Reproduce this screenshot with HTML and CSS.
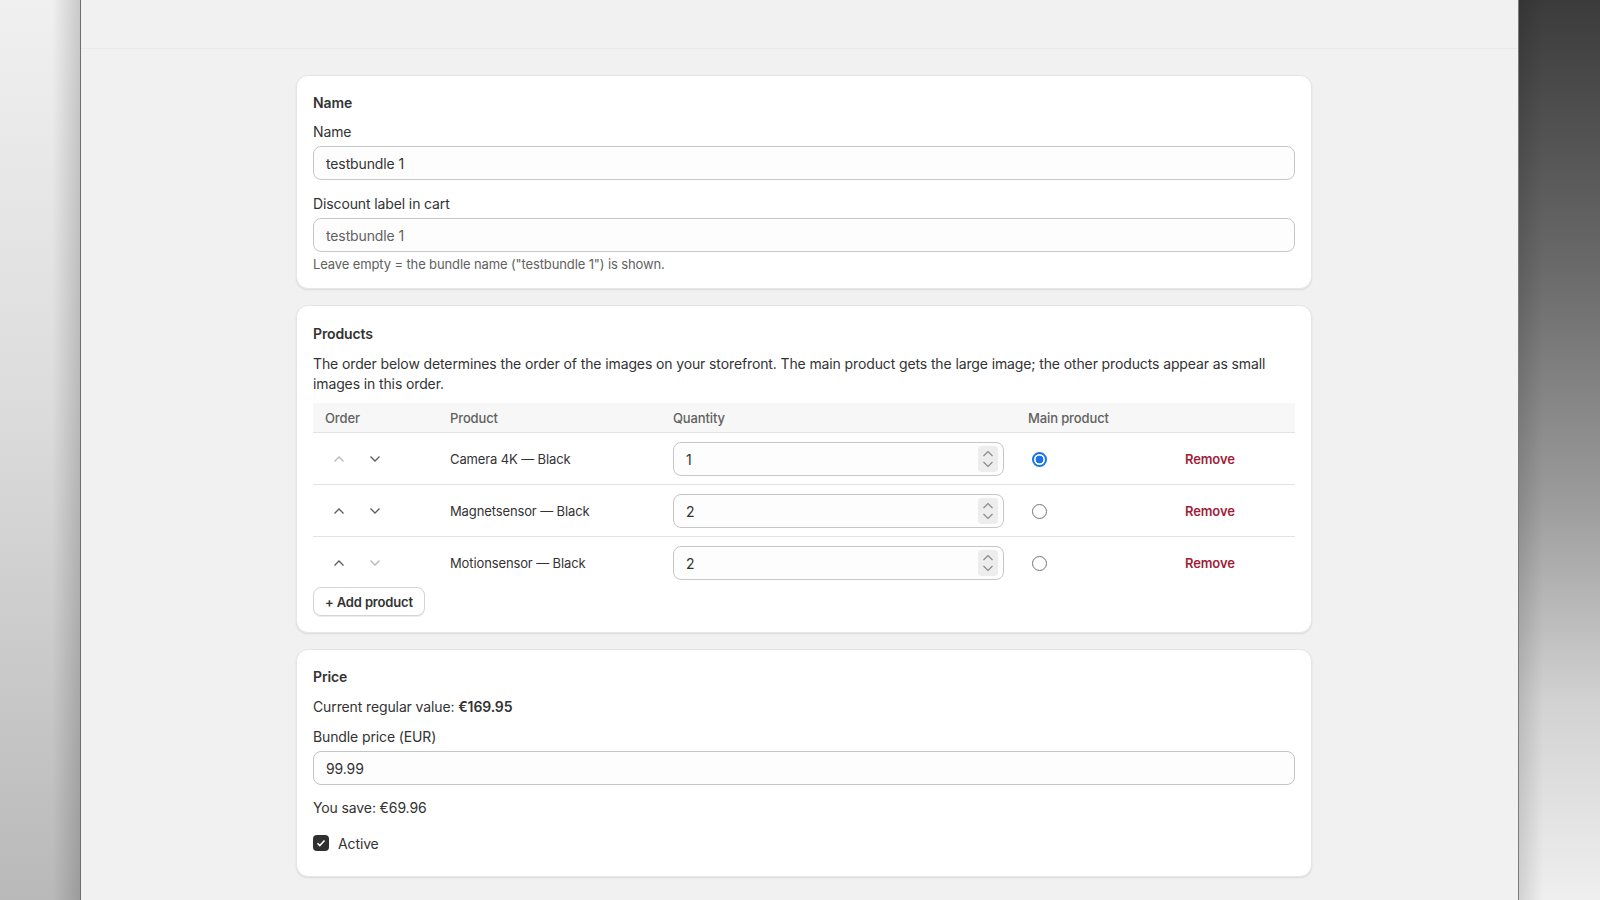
FILE: index.html
```html
<!DOCTYPE html>
<html lang="en">
    <head>
        <meta charset="UTF-8">
        <meta name="viewport" content="width=device-width, initial-scale=1.0">
        <title>Bundle editor</title>
        <link rel="stylesheet" href="styles.css">
    </head>
    <body>
        <div class="wall wall-left"></div>
        <div class="window">
            <div class="topbar"></div>
            <div class="content">
                <!-- Name -->
                <section class="card">
                    <h2>Name</h2>
                    <label class="label">Name</label>
                    <input class="field" type="text" value="testbundle 1">
                    <label class="label label-gap">Discount label in cart</label>
                    <input class="field field-muted" type="text" placeholder="testbundle 1">
                    <p class="help">Leave empty = the bundle name ("testbundle 1") is shown.</p>
                </section>

                <!-- Products -->
                <section class="card card-products">
                    <h2 class="products-title">Products</h2>
                    <p class="desc">The order below determines the order of the images on your storefront. The main product gets the large image; the other products appear as small images in this order.</p>
                    <div class="table">
                        <div class="row head">
                            <div class="cell">Order</div>
                            <div class="cell">Product</div>
                            <div class="cell">Quantity</div>
                            <div class="cell">Main product</div>
                            <div class="cell"></div>
                        </div>
                        <div class="row">
                            <div class="cell order">
                                <button class="arrow disabled"><svg viewBox="0 0 12 8"><path d="M1.5 6.5l4.5-4.5 4.5 4.5"/></svg></button>
                                <button class="arrow"><svg viewBox="0 0 12 8"><path d="M1.5 1.5l4.5 4.5 4.5-4.5"/></svg></button>
                            </div>
                            <div class="cell">Camera 4K — Black</div>
                            <div class="cell">
                                <div class="qty">
                                    <input class="field" type="text" value="1">
                                    <span class="spin"><svg viewBox="0 0 14 24"><path d="M2.5 9l4.5-4.5 4.5 4.5M2.5 15l4.5 4.5 4.5-4.5"/></svg></span>
                                </div>
                            </div>
                            <div class="cell"><span class="radio checked"></span></div>
                            <div class="cell"><a class="remove" href="#">Remove</a></div>
                        </div>
                        <div class="row">
                            <div class="cell order">
                                <button class="arrow"><svg viewBox="0 0 12 8"><path d="M1.5 6.5l4.5-4.5 4.5 4.5"/></svg></button>
                                <button class="arrow"><svg viewBox="0 0 12 8"><path d="M1.5 1.5l4.5 4.5 4.5-4.5"/></svg></button>
                            </div>
                            <div class="cell">Magnetsensor — Black</div>
                            <div class="cell">
                                <div class="qty">
                                    <input class="field" type="text" value="2">
                                    <span class="spin"><svg viewBox="0 0 14 24"><path d="M2.5 9l4.5-4.5 4.5 4.5M2.5 15l4.5 4.5 4.5-4.5"/></svg></span>
                                </div>
                            </div>
                            <div class="cell"><span class="radio"></span></div>
                            <div class="cell"><a class="remove" href="#">Remove</a></div>
                        </div>
                        <div class="row last">
                            <div class="cell order">
                                <button class="arrow"><svg viewBox="0 0 12 8"><path d="M1.5 6.5l4.5-4.5 4.5 4.5"/></svg></button>
                                <button class="arrow disabled"><svg viewBox="0 0 12 8"><path d="M1.5 1.5l4.5 4.5 4.5-4.5"/></svg></button>
                            </div>
                            <div class="cell">Motionsensor — Black</div>
                            <div class="cell">
                                <div class="qty">
                                    <input class="field" type="text" value="2">
                                    <span class="spin"><svg viewBox="0 0 14 24"><path d="M2.5 9l4.5-4.5 4.5 4.5M2.5 15l4.5 4.5 4.5-4.5"/></svg></span>
                                </div>
                            </div>
                            <div class="cell"><span class="radio"></span></div>
                            <div class="cell"><a class="remove" href="#">Remove</a></div>
                        </div>
                    </div>
                    <button class="add-btn">+ Add product</button>
                </section>

                <!-- Price -->
                <section class="card card-price">
                    <h2>Price</h2>
                    <p class="line">Current regular value: <b>€169.95</b></p>
                    <label class="label label-price">Bundle price (EUR)</label>
                    <input class="field" type="text" value="99.99">
                    <p class="line save">You save: €69.96</p>
                    <div class="check-row">
                        <span class="checkbox"><svg viewBox="0 0 16 16"><path d="M4.5 8.2l2.3 2.3 4.7-5"/></svg></span>
                        <span>Active</span>
                    </div>
                </section>
            </div>
        </div>
        <div class="wall wall-right"></div>
    </body>
</html>
```

FILE: styles.css
```css
* {
    box-sizing: border-box;
}

body {
    margin: 0;
    height: 900px;
    display: flex;
    overflow: hidden;
    font-family: Inter, "Noto Sans", sans-serif;
    font-size: 14px;
    letter-spacing: -0.12px;
    color: #333;
}

/* desktop behind the window */
.wall {
    height: 100%;
}

.wall-left {
    width: 80px;
    background:
        linear-gradient(to right, rgba(0, 0, 0, 0) 65%, rgba(0, 0, 0, 0.16) 100%),
        linear-gradient(to bottom, #f0f0f0 0%, #dcdcdc 45%, #b9b9b9 100%);
}

.wall-right {
    width: 81px;
    background:
        linear-gradient(to right, rgba(0, 0, 0, 0.12) 0%, rgba(0, 0, 0, 0) 30%),
        linear-gradient(to bottom, #3b3b3b 0%, #6a6a6a 30%, #9a9a9a 55%, #d2d2d2 78%, #efefef 100%);
}

.window {
    width: 1439px;
    height: 100%;
    background-color: #f1f1f1;
    border-left: 1px solid #6f6f6f;
    border-right: 1px solid #7a7a7a;
}

.topbar {
    height: 49px;
    border-bottom: 1px solid #e9e9e9;
}

.content {
    width: 1016px;
    margin-left: 215px;
    padding-top: 26px;
    display: flex;
    flex-direction: column;
    gap: 16px;
}

.card {
    background-color: #fff;
    border: 1px solid #e6e6e6;
    border-radius: 12px;
    padding: 17px 16px 16px;
    box-shadow: 0 1px 2px rgba(0, 0, 0, 0.1);
}

h2 {
    margin: 0;
    font-size: 14px;
    font-weight: 600;
    line-height: 20px;
}

.label {
    display: block;
    margin-top: 9px;
    margin-bottom: 4px;
    line-height: 20px;
}

.label-gap {
    margin-top: 14px;
}

.field {
    display: block;
    width: 100%;
    height: 34px;
    padding: 0 12px;
    font-family: inherit;
    font-size: 14px;
    letter-spacing: -0.12px;
    color: #333;
    background-color: #fdfdfd;
    border: 1px solid #c6c6c6;
    border-radius: 8px;
    outline: none;
}

.field-muted::placeholder {
    color: #616161;
}

.help {
    margin: 4px 0 0;
    font-size: 13px;
    line-height: 16px;
    color: #616161;
}

.card-products {
    padding-top: 18px;
}

.products-title {
    margin-bottom: 10px;
}

.desc {
    margin: 0 0 9px;
    line-height: 20px;
}

.table {
    font-size: 13px;
}

.row {
    display: grid;
    grid-template-columns: 125px 223px 355px 157px 1fr;
    align-items: center;
    padding: 9px 0 8px;
    border-bottom: 1px solid #e3e3e3;
}

.row.last {
    padding-bottom: 7px;
    border-bottom: none;
}

.row.head {
    height: 30px;
    padding: 0;
    background-color: #f7f7f7;
    color: #616161;
    font-weight: 500;
}

.cell {
    padding: 0 12px;
}

.order {
    display: flex;
    gap: 8px;
}

.arrow {
    width: 28px;
    height: 28px;
    padding: 0;
    border: none;
    background: none;
    display: flex;
    align-items: center;
    justify-content: center;
    cursor: pointer;
}

.arrow svg {
    width: 12px;
    height: 8px;
    fill: none;
    stroke: #5c5c5c;
    stroke-width: 1.3;
}

.arrow.disabled svg {
    stroke: #b8b8b8;
}

.qty {
    position: relative;
}

.spin {
    position: absolute;
    right: 6px;
    top: 4px;
    width: 20px;
    height: 26px;
    border-radius: 4px;
    background-color: #ededed;
    display: flex;
    align-items: center;
    justify-content: center;
}

.spin svg {
    width: 14px;
    height: 24px;
    fill: none;
    stroke: #8a8a8a;
    stroke-width: 1.2;
}

.radio {
    display: block;
    width: 15px;
    height: 15px;
    margin-left: 4px;
    border: 1px solid #767676;
    border-radius: 50%;
}

.radio.checked {
    border: 2px solid #1a73e8;
    background: radial-gradient(circle, #1a73e8 0 3.6px, #fff 4.2px);
}

.remove {
    color: #a21d37;
    font-weight: 600;
    text-decoration: none;
}

.add-btn {
    margin-top: 0;
    height: 29px;
    padding: 0 11px;
    font-family: inherit;
    font-size: 13px;
    font-weight: 600;
    letter-spacing: -0.15px;
    color: #333;
    background-color: #fff;
    border: 1px solid #d4d4d4;
    border-radius: 8px;
    box-shadow: 0 1px 0 rgba(0, 0, 0, 0.08);
    cursor: pointer;
}

.card-price {
    padding-bottom: 23px;
}

.line {
    margin: 10px 0 0;
    line-height: 20px;
}

.line b {
    font-weight: 600;
}

.label-price {
    margin-top: 10px;
}

.save {
    margin-top: 13px;
}

.check-row {
    margin-top: 15px;
    height: 20px;
    display: flex;
    align-items: center;
    gap: 9px;
}

.checkbox {
    width: 16px;
    height: 16px;
    border-radius: 4px;
    background-color: #303030;
    display: flex;
}

.checkbox svg {
    width: 16px;
    height: 16px;
    fill: none;
    stroke: #fff;
    stroke-width: 1.6;
}
```
